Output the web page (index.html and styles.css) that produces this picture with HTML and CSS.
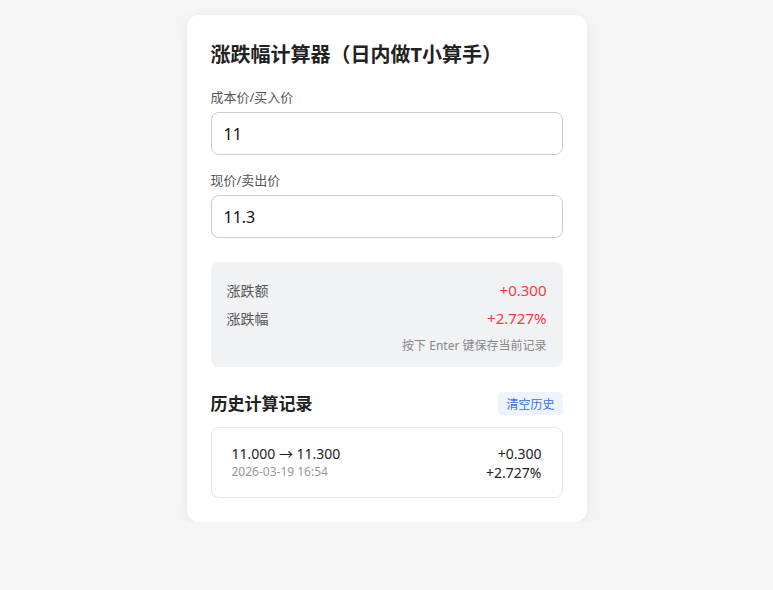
FILE: index.html
```html
<!DOCTYPE html>
<html lang="zh">
<head>
<meta charset="utf-8">
<link rel="stylesheet" href="styles.css">
</head>
<body>
<div class="card">
  <h1 class="title">涨跌幅计算器（日内做T小算手）</h1>
  <div class="field">
    <label class="label">成本价/买入价</label>
    <input class="input" type="text" value="11">
  </div>
  <div class="field">
    <label class="label">现价/卖出价</label>
    <input class="input" type="text" value="11.3">
  </div>
  <div class="result">
    <div class="row"><span class="rlabel">涨跌额</span><span class="rval">+0.300</span></div>
    <div class="row"><span class="rlabel">涨跌幅</span><span class="rval">+2.727%</span></div>
    <div class="hint">按下 Enter 键保存当前记录</div>
  </div>
  <div class="hist-head">
    <h2 class="hist-title">历史计算记录</h2>
    <button class="clear">清空历史</button>
  </div>
  <div class="item">
    <div class="item-left">
      <div class="prices">11.000 → 11.300</div>
      <div class="date">2026-03-19 16:54</div>
    </div>
    <div class="item-right">
      <div>+0.300</div>
      <div>+2.727%</div>
    </div>
  </div>
</div>
</body>
</html>
```

FILE: styles.css
```css
* { box-sizing: border-box; }
html, body { margin: 0; padding: 0; }
body {
  background: #f5f5f5;
  font-family: "Noto Sans", "Noto Sans CJK SC", sans-serif;
  color: #222;
  padding-top: 15px;
}
.card {
  width: 400px;
  margin: 0 auto;
  background: #fff;
  border-radius: 12px;
  padding: 26px 24px 24px;
  box-shadow: 0 2px 12px rgba(0,0,0,0.06);
}
.title {
  margin: 0 0 19px;
  font-size: 20px;
  line-height: 28px;
  font-weight: 700;
  color: #222;
}
.field { margin-bottom: 16px; }
.label {
  display: block;
  font-size: 13px;
  line-height: 18px;
  color: #555;
  margin-bottom: 6px;
}
.input {
  display: block;
  width: 100%;
  height: 43px;
  border: 1px solid #ccc;
  border-radius: 8px;
  padding: 0 12px;
  font-size: 16px;
  font-family: "Noto Sans", "Noto Sans CJK SC", sans-serif;
  color: #111;
  background: #fff;
  outline: none;
}
.result {
  margin-top: 24px;
  background: #f1f2f4;
  border-radius: 8px;
  padding: 14px 16px 11px;
}
.row {
  display: flex;
  justify-content: space-between;
  align-items: center;
  height: 28px;
}
.rlabel { font-size: 14px; color: #555; }
.rval { font-size: 15px; color: #f53b3b; }
.hint {
  text-align: right;
  font-size: 12px;
  color: #888;
  margin-top: 4px;
  line-height: 20px;
}
.hist-head {
  display: flex;
  justify-content: space-between;
  align-items: center;
  margin-top: 25px;
  margin-bottom: 12px;
}
.hist-title {
  margin: 0;
  font-size: 17px;
  line-height: 23px;
  font-weight: 700;
  color: #222;
}
.clear {
  border: none;
  background: #eef4ff;
  color: #3b6cf0;
  font-size: 12px;
  font-family: "Noto Sans", "Noto Sans CJK SC", sans-serif;
  padding: 0 8px;
  height: 23px;
  border-radius: 4px;
}
.item {
  display: flex;
  justify-content: space-between;
  align-items: center;
  border: 1px solid #e5e5e5;
  border-radius: 8px;
  padding: 0 20px;
  height: 71px;
}
.prices { font-size: 14px; color: #222; line-height: 18px; }
.date { font-size: 12px; color: #999; line-height: 17px; }
.item-right { text-align: right; font-size: 14px; color: #222; line-height: 19px; }
```
